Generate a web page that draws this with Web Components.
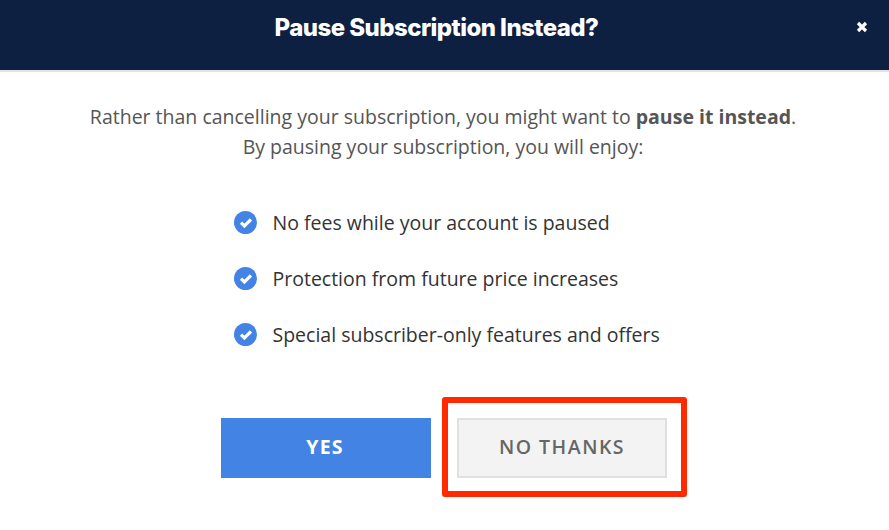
<!DOCTYPE html>
<html>
<head>
<meta charset="utf-8">
<title>Pause Subscription</title>
<style>
html, body { margin: 0; padding: 0; background: #fff; }
body { width: 889px; height: 530px; overflow: hidden; font-family: "Open Sans", sans-serif; }
</style>
</head>
<body>
<pause-modal>
  <span slot="title">Pause Subscription Instead?</span>
  <span slot="intro">Rather than cancelling your subscription, you might want to <b>pause it instead</b>.<br>By pausing your subscription, you will enjoy:</span>
  <check-item>No fees while your account is paused</check-item>
  <check-item>Protection from future price increases</check-item>
  <check-item>Special subscriber-only features and offers</check-item>
  <modal-button slot="actions" kind="primary">YES</modal-button>
  <modal-button slot="actions" kind="secondary" highlighted>NO THANKS</modal-button>
</pause-modal>

<script>
const modalTemplate = document.createElement('template');
modalTemplate.innerHTML = `
<style>
:host { display: block; width: 889px; height: 530px; background: #fff; color: #555; }
.modal__header {
    display: flex;
    justify-content: center;
    position: relative;
    box-sizing: border-box;
    height: 72px;
    padding: 10px 16px 0 0;
    background: #0e2042;
    border-bottom: 2px solid #e3e3e3;
    color: #fff;
    font-family: "Inter", sans-serif;
    font-size: 24px;
    font-weight: 800;
    letter-spacing: -0.55px;
    line-height: 36px;
}
.modal__close {
    position: absolute;
    top: 21px;
    right: 21px;
    width: 12px;
    height: 12px;
}
.modal__intro {
    margin: 30px 0 0;
    padding-right: 3px;
    text-align: center;
    font-size: 19.5px;
    line-height: 30px;
}
.modal__list {
    display: flex;
    flex-direction: column;
    gap: 24px;
    margin: 44px 0 0 234px;
}
.modal__actions {
    display: flex;
    justify-content: center;
    gap: 26px;
    margin: 68px 1px 0 0;
}
</style>
<header class="modal__header">
    <slot name="title"></slot>
    <svg class="modal__close" viewBox="0 0 12 12"><path d="M2 2l8 8M10 2l-8 8" stroke="#fff" stroke-width="3.2" fill="none"/></svg>
</header>
<p class="modal__intro"><slot name="intro"></slot></p>
<div class="modal__list"><slot></slot></div>
<div class="modal__actions"><slot name="actions"></slot></div>
`;

class PauseModal extends HTMLElement {
    constructor() {
        super();
        this.attachShadow({ mode: 'open' });
        this.shadowRoot.appendChild(modalTemplate.content.cloneNode(true));
    }
}

const itemTemplate = document.createElement('template');
itemTemplate.innerHTML = `
<style>
:host { display: flex; align-items: center; gap: 15.5px; height: 32px; color: #333; font-size: 19.5px; }
svg { width: 23px; height: 23px; flex: none; }
</style>
<svg viewBox="0 0 23 23">
    <circle cx="11.5" cy="11.5" r="11.5" fill="#4283e4"/>
    <path d="M7 11.6l3.4 3.4 6.6-6.6" stroke="#fff" stroke-width="3.2" fill="none"/>
</svg>
<span><slot></slot></span>
`;

class CheckItem extends HTMLElement {
    constructor() {
        super();
        this.attachShadow({ mode: 'open' });
        this.shadowRoot.appendChild(itemTemplate.content.cloneNode(true));
    }
}

const buttonTemplate = document.createElement('template');
buttonTemplate.innerHTML = `
<style>
:host {
    display: flex;
    align-items: center;
    justify-content: center;
    position: relative;
    box-sizing: border-box;
    width: 210px;
    height: 60px;
    padding: 0 2px 3px 0;
    font-size: 19.5px;
    font-weight: 600;
    letter-spacing: 1.5px;
}
:host([kind="primary"]) { background: #4283e4; color: #fff; font-weight: 700; letter-spacing: 1.2px; }
:host([kind="secondary"]) { background: #f3f3f3; border: 2px solid #e0e0e0; padding-right: 0; color: #666; }
.callout { display: none; }
:host([highlighted]) .callout {
    display: block;
    position: absolute;
    top: -23px;
    left: -17px;
    width: 245px;
    height: 100px;
    box-sizing: border-box;
    border: 6px solid #ff2a00;
    border-radius: 3px;
}
</style>
<slot></slot>
<div class="callout"></div>
`;

class ModalButton extends HTMLElement {
    constructor() {
        super();
        this.attachShadow({ mode: 'open' });
        this.shadowRoot.appendChild(buttonTemplate.content.cloneNode(true));
    }
}

customElements.define('pause-modal', PauseModal);
customElements.define('check-item', CheckItem);
customElements.define('modal-button', ModalButton);
</script>
</body>
</html>
